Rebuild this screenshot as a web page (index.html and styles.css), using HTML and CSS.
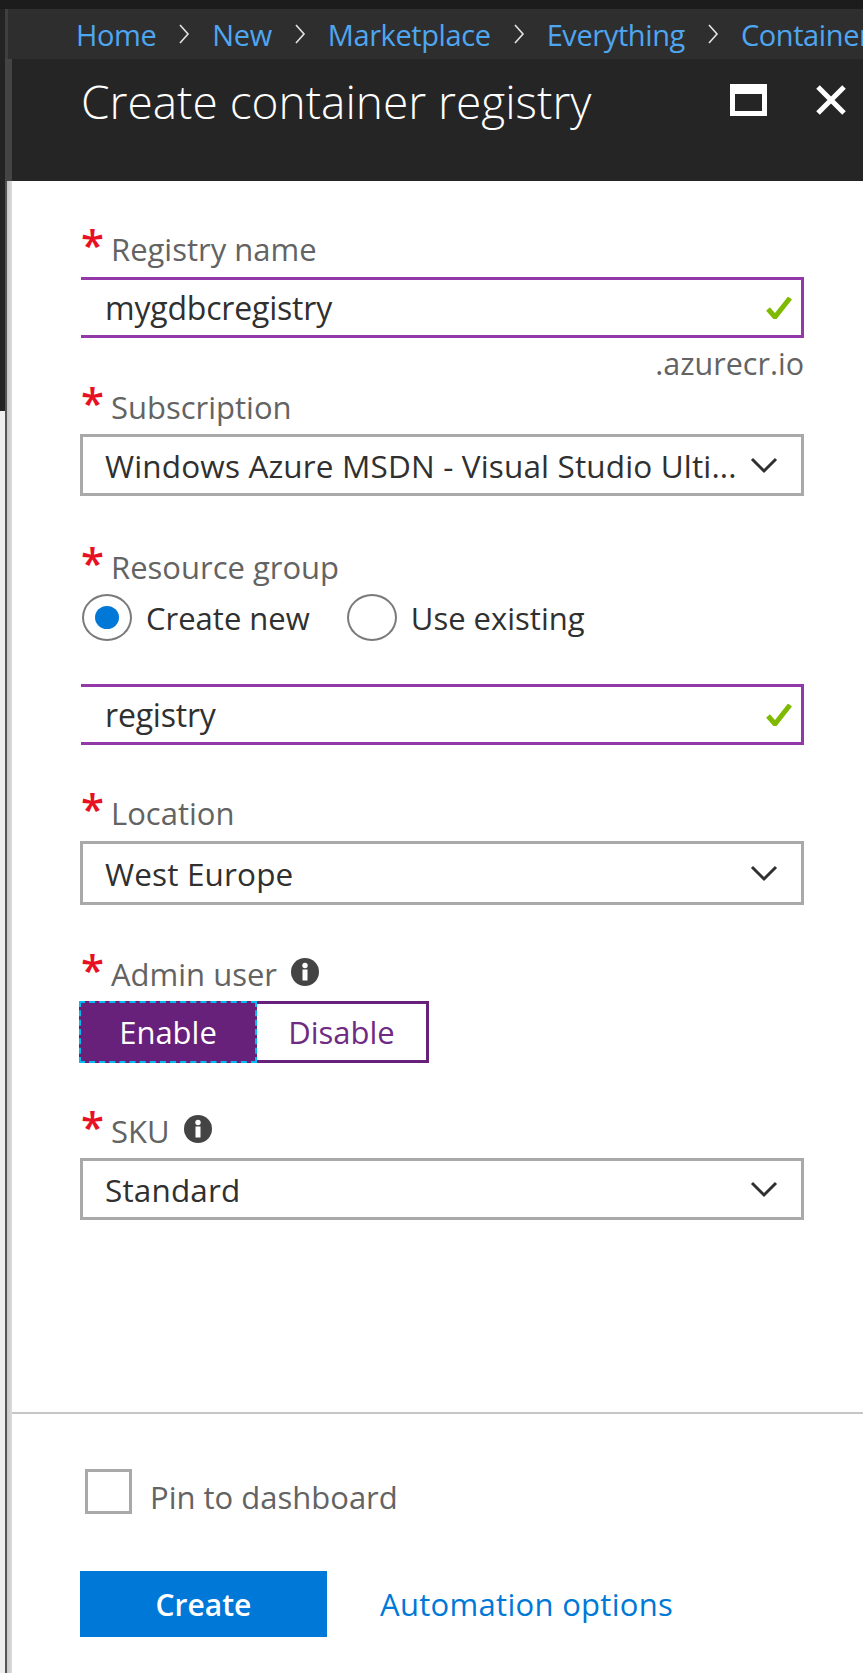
FILE: index.html
```html
<!DOCTYPE html>
<html lang="en">
<head>
    <meta charset="UTF-8">
    <meta name="viewport" content="width=device-width, initial-scale=1.0">
    <title>Create container registry</title>
    <link rel="stylesheet" href="styles.css">
</head>
<body>
<div class="screen">
    <div class="top-strip"></div>
    <div class="shell">
        <div class="rail"><div class="rail-dark"></div></div>
        <main class="blade">
            <nav class="crumbs">
                <a href="#">Home</a>
                <svg class="crumb-sep" viewBox="0 0 12 20"><path d="M2 1l8 9-8 9"/></svg>
                <a href="#">New</a>
                <svg class="crumb-sep" viewBox="0 0 12 20"><path d="M2 1l8 9-8 9"/></svg>
                <a href="#">Marketplace</a>
                <svg class="crumb-sep" viewBox="0 0 12 20"><path d="M2 1l8 9-8 9"/></svg>
                <a href="#">Everything</a>
                <svg class="crumb-sep" viewBox="0 0 12 20"><path d="M2 1l8 9-8 9"/></svg>
                <a href="#">Container</a>
            </nav>
            <header class="blade-head">
                <h1>Create container registry</h1>
                <div class="head-icons">
                    <svg class="icon-max" viewBox="0 0 37 32"><path d="M0 0h37v32H0z M5 10v17h27V10z" fill-rule="evenodd"/></svg>
                    <svg class="icon-close" viewBox="0 0 32 32"><path d="M3 3l26 26M29 3L3 29"/></svg>
                </div>
            </header>
            <form class="content">
                <div class="form-body">
                    <div class="field-label first"><span class="star">*</span>Registry name</div>
                    <div class="text-box">
                        <input type="text" value="mygdbcregistry">
                        <svg class="check" viewBox="0 0 26 22"><path d="M2 12l7 8L24 1"/></svg>
                    </div>
                    <div class="suffix">.azurecr.io</div>

                    <div class="field-label"><span class="star">*</span>Subscription</div>
                    <div class="dropdown">
                        <span>Windows Azure MSDN - Visual Studio Ulti...</span>
                        <svg class="chevron" viewBox="0 0 28 17"><path d="M2 2l12 12L26 2"/></svg>
                    </div>

                    <div class="field-label after-select resource"><span class="star">*</span>Resource group</div>
                    <div class="radio-row">
                        <label class="radio"><span class="radio-mark on"></span>Create new</label>
                        <label class="radio"><span class="radio-mark"></span>Use existing</label>
                    </div>
                    <div class="text-box below-radio">
                        <input type="text" value="registry">
                        <svg class="check" viewBox="0 0 26 22"><path d="M2 12l7 8L24 1"/></svg>
                    </div>

                    <div class="field-label after-select location"><span class="star">*</span>Location</div>
                    <div class="dropdown tall">
                        <span>West Europe</span>
                        <svg class="chevron" viewBox="0 0 28 17"><path d="M2 2l12 12L26 2"/></svg>
                    </div>

                    <div class="field-label after-select admin"><span class="star">*</span>Admin user
                        <svg class="info" viewBox="0 0 28 28"><circle cx="14" cy="14" r="14"/><rect class="info-i" x="11.5" y="11.5" width="5" height="11"/><circle class="info-i" cx="14" cy="7.5" r="2.7"/></svg>
                    </div>
                    <div class="toggle">
                        <button type="button" class="toggle-on">Enable</button>
                        <button type="button" class="toggle-off">Disable</button>
                    </div>

                    <div class="field-label after-select"><span class="star">*</span>SKU
                        <svg class="info" viewBox="0 0 28 28"><circle cx="14" cy="14" r="14"/><rect class="info-i" x="11.5" y="11.5" width="5" height="11"/><circle class="info-i" cx="14" cy="7.5" r="2.7"/></svg>
                    </div>
                    <div class="dropdown">
                        <span>Standard</span>
                        <svg class="chevron" viewBox="0 0 28 17"><path d="M2 2l12 12L26 2"/></svg>
                    </div>
                </div>
                <div class="form-foot">
                    <label class="pin"><span class="pin-box"></span>Pin to dashboard</label>
                    <div class="actions">
                        <button type="submit" class="create-btn">Create</button>
                        <a href="#" class="auto-link">Automation options</a>
                    </div>
                </div>
            </form>
        </main>
    </div>
</div>
</body>
</html>
```

FILE: styles.css
```css
html, body {
    margin: 0;
    padding: 0;
    background-color: #fff;
}
.screen {
    width: 863px;
    height: 1673px;
    display: flex;
    flex-direction: column;
    overflow: hidden;
    font-family: 'Open Sans', 'Liberation Sans', sans-serif;
}
.top-strip {
    height: 9px;
    flex: none;
    background-color: #1c1c1c;
}
.shell {
    flex: 1;
    display: flex;
    min-height: 0;
}
.rail {
    width: 5px;
    flex: none;
    background-color: #eee;
}
.rail-dark {
    height: 402px;
    background-color: #232323;
}
.blade {
    flex: 1;
    min-width: 0;
    display: flex;
    flex-direction: column;
}

/* breadcrumb */
.crumbs {
    height: 50px;
    flex: none;
    display: flex;
    align-items: center;
    gap: 22px;
    padding-left: 68px;
    border-left: 3px solid #3c4043;
    background-color: #2e2e2e;
    white-space: nowrap;
    overflow: hidden;
    font-size: 29px;
    letter-spacing: -0.4px;
}
.crumbs a {
    color: #4ea6f0;
    text-decoration: none;
}
.crumb-sep {
    width: 12px;
    height: 20px;
    flex: none;
    fill: none;
    stroke: #e4e4e4;
    stroke-width: 1.6;
}

/* blade title */
.blade-head {
    height: 122px;
    flex: none;
    box-sizing: border-box;
    display: flex;
    justify-content: space-between;
    padding: 14px 16px 0 69px;
    border-left: 7px solid #444;
    background-color: #252525;
}
.blade-head h1 {
    margin: 0;
    font-size: 46px;
    line-height: 56px;
    font-weight: 300;
    color: #fff;
}
.head-icons {
    display: flex;
    gap: 48px;
    padding-top: 11px;
}
.icon-max {
    width: 37px;
    height: 32px;
    fill: #fff;
}
.icon-close {
    width: 32px;
    height: 32px;
    fill: none;
    stroke: #fff;
    stroke-width: 5;
}

/* form */
.content {
    flex: 1;
    display: flex;
    flex-direction: column;
    background: linear-gradient(to right, #555 2px, #c6c6c6 2px, #dcdcdc 7px, #fff 7px);
}
.form-body {
    height: 1231px;
    flex: none;
    box-sizing: border-box;
    padding: 48px 59px 0 76px;
}
.field-label {
    height: 40px;
    display: flex;
    align-items: center;
    margin-bottom: 7px;
    font-size: 31px;
    color: #636363;
}
.field-label.first {
    margin-bottom: 8px;
}
.field-label.after-select {
    margin-top: 48px;
}
.field-label.resource {
    margin-top: 51px;
    margin-bottom: 7px;
}
.field-label.location {
    margin-bottom: 8px;
}
.field-label.admin {
    margin-top: 49px;
    margin-bottom: 7px;
}
.star {
    width: 30px;
    flex: none;
    align-self: flex-start;
    height: 22px;
    margin-top: -5px;
    font-size: 42px;
    line-height: 40px;
    font-weight: 600;
    color: #e81123;
}
.info {
    width: 28px;
    height: 28px;
    margin-left: 14px;
    margin-top: -4px;
    fill: #444;
}
.info .info-i {
    fill: #fff;
}
.text-box {
    height: 61px;
    box-sizing: border-box;
    display: flex;
    align-items: center;
    padding-right: 9px;
    border: 3px solid #9238a9;
    border-left: none;
}
.text-box input {
    flex: 1;
    min-width: 0;
    border: none;
    outline: none;
    padding: 0 0 0 24px;
    background: none;
    font-family: inherit;
    font-size: 32px;
    letter-spacing: -0.2px;
    color: #303030;
}
.below-radio {
    margin-top: 43px;
}
.check {
    width: 26px;
    height: 22px;
    fill: none;
    stroke: #7fba00;
    stroke-width: 5;
}
.suffix {
    height: 49px;
    line-height: 50px;
    text-align: right;
    font-size: 30.5px;
    color: #636363;
}
.dropdown {
    height: 62px;
    box-sizing: border-box;
    margin-left: -1px;
    display: flex;
    align-items: center;
    justify-content: space-between;
    padding: 0 23px 0 22px;
    border: 3px solid #a9a9a9;
    font-size: 31.5px;
    letter-spacing: 0.15px;
    color: #303030;
    white-space: nowrap;
}
.dropdown.tall {
    height: 64px;
}
.chevron {
    width: 28px;
    height: 17px;
    flex: none;
    fill: none;
    stroke: #303030;
    stroke-width: 3;
}
.radio-row {
    display: flex;
    gap: 37px;
    height: 47px;
    margin-left: 1px;
}
.radio {
    display: flex;
    align-items: center;
    gap: 14px;
    font-size: 31px;
    color: #303030;
}
.radio-mark {
    width: 50px;
    height: 47px;
    flex: none;
    box-sizing: border-box;
    display: flex;
    align-items: center;
    justify-content: center;
    border: 2px solid #7a7a7a;
    border-radius: 50%;
}
.radio-mark.on::after {
    content: "";
    width: 24px;
    height: 23px;
    border-radius: 50%;
    background-color: #0078d7;
}
.toggle {
    display: flex;
    margin-left: -2px;
    height: 62px;
}
.toggle button {
    box-sizing: border-box;
    padding: 0;
    font-family: inherit;
    font-size: 31px;
}
.toggle-on {
    width: 178px;
    border: 2px dashed #00bcf2;
    background-color: #68217a;
    color: #fff;
}
.toggle-off {
    width: 172px;
    border: 3px solid #68217a;
    border-left: none;
    background-color: #fff;
    color: #6f2a83;
}

/* footer */
.form-foot {
    flex: 1;
    box-sizing: border-box;
    padding: 55px 0 0 68px;
    margin-left: 7px;
    border-top: 2px solid #c6c6c6;
}
.pin {
    display: flex;
    align-items: flex-end;
    gap: 18px;
    margin-left: 5px;
    height: 45px;
    font-size: 31px;
    line-height: 34px;
    color: #636363;
}
.pin-box {
    width: 47px;
    height: 45px;
    flex: none;
    box-sizing: border-box;
    border: 3px solid #a9a9a9;
}
.actions {
    display: flex;
    align-items: center;
    gap: 53px;
    margin-top: 57px;
}
.create-btn {
    width: 247px;
    height: 66px;
    padding: 0;
    border: none;
    background-color: #0078d7;
    color: #fff;
    font-family: inherit;
    font-size: 30px;
    font-weight: 600;
}
.auto-link {
    font-size: 31px;
    letter-spacing: 0.3px;
    color: #0078d7;
    text-decoration: none;
}
```
